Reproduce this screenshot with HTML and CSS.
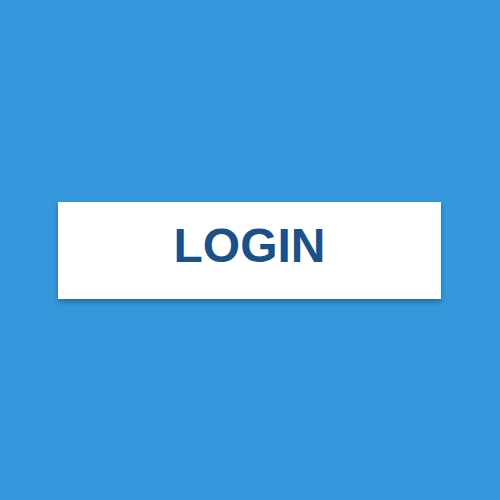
FILE: index.html
```html
<!DOCTYPE html>
<html>
<head>
<meta charset="utf-8">
<link rel="stylesheet" href="styles.css">
</head>
<body>
<div class="stage">
  <button class="login">LOGIN</button>
</div>
</body>
</html>
```
FILE: styles.css
```css
html, body {
  margin: 0;
  padding: 0;
  width: 500px;
  height: 500px;
  background: #3598dc;
}
.stage {
  width: 500px;
  height: 500px;
  display: flex;
  align-items: center;
  justify-content: center;
}
.login {
  box-sizing: border-box;
  width: 383px;
  height: 97px;
  margin-left: -1px;
  background: #ffffff;
  border: none;
  border-radius: 0;
  padding: 0 0 8px 0;
  font-family: "Liberation Sans", Arial, sans-serif;
  font-weight: bold;
  font-size: 48px;
  line-height: 1;
  color: #1b5186;
  box-shadow: 0 3px 5px rgba(0, 0, 0, 0.3);
  display: flex;
  align-items: center;
  justify-content: center;
}
```
